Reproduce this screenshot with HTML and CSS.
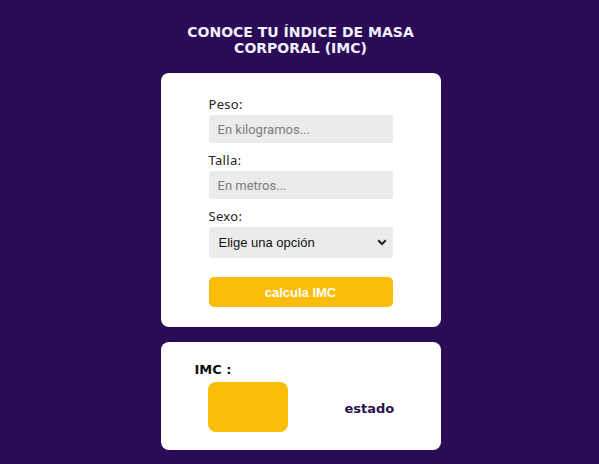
FILE: index.html
```html
<!DOCTYPE html>
<html lang="es">
<head>
<meta charset="utf-8">
<title>IMC</title>
<link rel="stylesheet" href="styles.css">
</head>
<body>
<main class="page">
  <h1 class="title">CONOCE TU ÍNDICE DE MASA<br>CORPORAL (IMC)</h1>
  <form class="card form-card">
    <label class="label" for="peso">Peso:</label>
    <input class="field" id="peso" type="text" placeholder="En kilogramos...">
    <label class="label" for="talla">Talla:</label>
    <input class="field" id="talla" type="text" placeholder="En metros...">
    <label class="label" for="sexo">Sexo:</label>
    <div class="select-wrap">
      <select class="field select" id="sexo">
        <option>Elige una opción</option>
      </select>
      <svg class="chev" width="10" height="7" viewBox="0 0 10 7"><path d="M1.2 1.2 5 5 8.8 1.2" fill="none" stroke="#222" stroke-width="2"/></svg>
    </div>
    <button class="btn" type="button">calcula IMC</button>
  </form>
  <section class="card result-card">
    <div class="result-left">
      <div class="imc-label">IMC :</div>
      <div class="imc-box"></div>
    </div>
    <div class="estado">estado</div>
  </section>
</main>
</body>
</html>
```
FILE: styles.css
```css
html, body {
  margin: 0;
  padding: 0;
  background: #2a0c56;
}
.page {
  display: flex;
  flex-direction: column;
  align-items: center;
  padding: 24px 0 0 2px;
}
.title {
  margin: 0 0 17px;
  font-family: "DejaVu Sans", Verdana, sans-serif;
  font-weight: bold;
  font-size: 14px;
  line-height: 16px;
  color: #f4f0ff;
  text-align: center;
}
.card {
  box-sizing: border-box;
  width: 280px;
  background: #fff;
  border-radius: 8px;
}
.form-card {
  display: flex;
  flex-direction: column;
  padding: 22px 48px 20px;
}
.label {
  font-family: "Noto Sans", sans-serif;
  font-size: 13px;
  line-height: 18px;
  letter-spacing: 0.3px;
  color: #222;
  margin-bottom: 2px;
}
.field {
  box-sizing: border-box;
  width: 184px;
  height: 28px;
  border: none;
  border-radius: 3px;
  background: #ebebeb;
  padding: 0 9px;
  font-family: Roboto, "Liberation Sans", sans-serif;
  font-size: 13px;
  color: #222;
  margin-bottom: 8px;
  outline: none;
}
.field::placeholder {
  color: #7d7d7d;
}
.select-wrap {
  position: relative;
  margin-bottom: 19px;
}
.select {
  -webkit-appearance: none;
  appearance: none;
  height: 31px;
  margin: 0;
  padding: 0 10px;
  font-family: "Liberation Sans", Arial, sans-serif;
  color: #111;
}
.chev {
  position: absolute;
  right: 6px;
  top: 12px;
}
.btn {
  width: 184px;
  height: 30px;
  border: none;
  border-radius: 5px;
  background: #fbbd08;
  color: #fff;
  font-family: "Liberation Sans", Arial, sans-serif;
  font-weight: bold;
  font-size: 13px;
  padding: 0;
}
.result-card {
  margin-top: 15px;
  height: 108px;
  display: flex;
  align-items: flex-start;
  padding: 20px 0 0 34px;
}
.result-left {
  display: flex;
  flex-direction: column;
}
.imc-label {
  font-family: "DejaVu Sans", Verdana, sans-serif;
  font-weight: bold;
  font-size: 13px;
  line-height: 16px;
  color: #111;
  margin-bottom: 4px;
}
.imc-box {
  width: 80px;
  height: 50px;
  margin-left: 13px;
  background: #fbbd08;
  border-radius: 8px;
}
.estado {
  margin: 39px 0 0 57px;
  font-family: "DejaVu Sans", Verdana, sans-serif;
  font-weight: bold;
  font-size: 13px;
  line-height: 16px;
  color: #2a1450;
}
```
